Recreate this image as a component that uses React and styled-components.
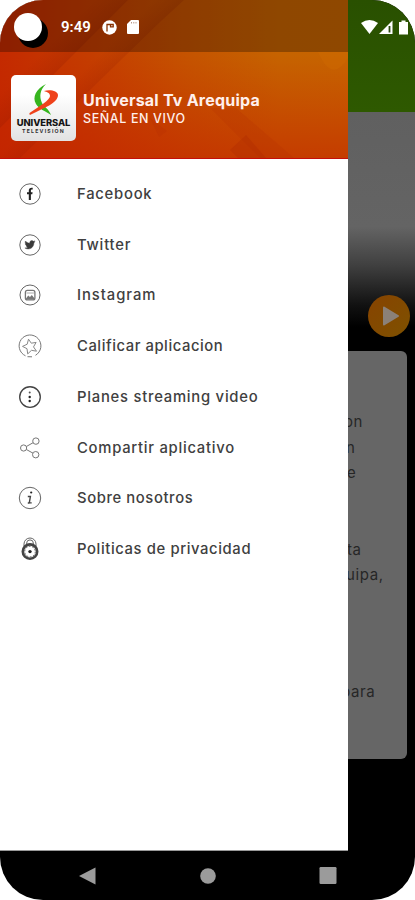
import React from 'react';
import styled, { createGlobalStyle } from 'styled-components';

const GlobalStyle = createGlobalStyle`
  * {
    box-sizing: border-box;
  }

  body {
    margin: 0;
    background: #fff;
    font-family: Inter, 'Open Sans', sans-serif;
  }
`;

const Phone = styled.div`
  width: 415px;
  height: 900px;
  display: flex;
  flex-direction: column;
  position: relative;
  overflow: hidden;
  background: #000;
  border-radius: 43px;
`;

const Content = styled.div`
  display: flex;
  height: 851px;
`;

const Drawer = styled.aside`
  width: 348px;
  flex: none;
  background: #fff;
  border-bottom: 1px solid #999;
`;

const Header = styled.header`
  position: relative;
  height: 159px;
  border-bottom: 1px solid #c40f0c;
  background:
    linear-gradient(to bottom, rgba(196, 34, 0, 0) 35%, rgba(196, 34, 0, 0.6) 100%),
    linear-gradient(to right, #c42a00 0%, #c43c00 25%, #c55400 55%, #c66300 80%, #c66400 100%);
`;

const Pattern = styled.svg`
  position: absolute;
  inset: 0;
`;

const StatusShade = styled.div`
  position: relative;
  height: 52px;
  background: rgba(0, 0, 0, 0.28);
`;

const Brand = styled.div`
  position: relative;
  display: flex;
  align-items: center;
  height: 106px;
  padding: 5px 0 0 11px;
  gap: 7px;
`;

const Logo = styled.div`
  width: 65px;
  height: 66px;
  flex: none;
  display: flex;
  flex-direction: column;
  align-items: center;
  padding-top: 8px;
  border-radius: 5px;
  background: linear-gradient(#fff 30%, #e2e2e2);
`;

const LogoName = styled.span`
  margin-top: 1px;
  font-size: 9.4px;
  line-height: 9px;
  font-weight: 800;
  letter-spacing: -0.1px;
  color: #151515;
`;

const LogoSub = styled.span`
  font-size: 5.2px;
  line-height: 8px;
  font-weight: 700;
  letter-spacing: 1.2px;
  color: #333;
`;

const Titles = styled.div`
  display: flex;
  flex-direction: column;
  padding-top: 4px;
  color: #fff0ec;
  white-space: nowrap;
`;

const Title = styled.span`
  font-size: 16px;
  line-height: 19px;
  font-weight: 700;
  letter-spacing: 0.22px;
`;

const Subtitle = styled.span`
  font-size: 12.5px;
  line-height: 18px;
  font-weight: 500;
  letter-spacing: 0.6px;
`;

const Menu = styled.nav`
  display: flex;
  flex-direction: column;
  padding-top: 9.6px;
`;

const MenuItem = styled.a`
  display: flex;
  align-items: center;
  height: 50.75px;
  padding-left: 18px;
  gap: 35px;
  color: #404040;
  font-size: 14.8px;
  font-weight: 500;
  letter-spacing: ${({ $spacing }) => $spacing}px;
  white-space: nowrap;

  svg {
    flex: none;
  }
`;

const Page = styled.main`
  flex: 1;
  min-width: 0;
  display: flex;
  flex-direction: column;
  overflow: hidden;
`;

const Toolbar = styled.div`
  height: 112px;
  flex: none;
  background: linear-gradient(#295000, #2e5900);
`;

const Video = styled.div`
  height: 239px;
  flex: none;
  padding: 183px 5px 0 0;
  display: flex;
  justify-content: flex-end;
  align-items: flex-start;
  background: linear-gradient(#606060 0%, #646464 48%, #404040 64%, #111 81%, #000 90%);
`;

const PlayButton = styled.div`
  width: 42px;
  height: 42px;
  display: flex;
  align-items: center;
  justify-content: center;
  padding-left: 4px;
  border-radius: 50%;
  background: linear-gradient(135deg, #874300, #7e5100);
`;

const Card = styled.section`
  height: 408px;
  margin-right: 8px;
  padding-top: 58px;
  border-radius: 0 6px 6px 0;
  background: #666;
  overflow: hidden;
`;

const Line = styled.p`
  margin: ${({ $gap }) => $gap || 0}px 0 0 ${({ $shift }) => $shift}px;
  height: 25.5px;
  line-height: 25.5px;
  font-size: 15px;
  letter-spacing: 0.6px;
  color: #262626;
  white-space: nowrap;
`;

const StatusBar = styled.div`
  position: absolute;
  top: 0;
  left: 0;
  right: 0;
  height: 52px;
  display: flex;
  align-items: center;
  padding: 2px 6px 0 14px;
  color: #fff;
`;

const Camera = styled.div`
  width: 28px;
  height: 28px;
  margin-right: 19px;
  border-radius: 50%;
  background: #fff;
  box-shadow: 5px 6px 0 1px #000;
`;

const Clock = styled.span`
  width: 41px;
  font-family: Roboto, sans-serif;
  font-size: 15px;
  font-weight: 600;
`;

const StatusIcons = styled.div`
  display: flex;
  align-items: center;
  gap: ${({ $gap }) => $gap}px;
  margin-left: ${({ $end }) => ($end ? 'auto' : 0)};
`;

const NavBar = styled.div`
  flex: 1;
  display: flex;
  align-items: center;
  justify-content: space-between;
  padding: 0 78px 0 79px;
`;

const Icon = ({ size = 24, children }) => (
  <svg width={size} height={size} viewBox="0 0 24 24" fill="none" stroke="#666" strokeWidth="1">
    {children}
  </svg>
);

const FacebookIcon = () => (
  <Icon>
    <circle cx="12" cy="12" r="10.2" />
    <path
      d="M10.8 18v-5.8H9v-2h1.8V8.600c0-2.200 1.200-3.200 3.900-2.900v1.900c-1.400-.1-1.800.2-1.800 1.100v1.500h1.700l-.3 2h-1.400V18z"
      fill="#222"
      stroke="none"
    />
  </Icon>
);

const TwitterIcon = () => (
  <Icon>
    <circle cx="12" cy="12" r="10.2" />
    <path
      d="M17 8.600c-.4.2-.8.3-1.200.3.4-.3.7-.7.9-1.100-.4.2-.9.4-1.300.5a2.100 2.100 0 0 0-3.600 1.900c-1.700-.1-3.300-.9-4.300-2.200-.6 1-.3 2.200.6 2.800-.3 0-.6-.1-.9-.3 0 1 .7 1.900 1.700 2.100-.3.1-.6.1-.9 0 .2.9 1 1.500 1.900 1.500-.8.7-2 1-3 .9 4.400 2.700 9.100-.4 9-5.200.4-.3.8-.7 1.100-1.200z"
      fill="#3a3a3a"
      stroke="#3a3a3a"
      strokeWidth=".4"
    />
  </Icon>
);

const InstagramIcon = () => (
  <Icon>
    <circle cx="12" cy="12" r="10" />
    <rect x="7.400" y="7.400" width="9.500" height="9.500" rx="2" strokeWidth="1.300" stroke="#777" />
    <path d="M8 15.500l2.200-3 1.800 1.600 1.800-2.100 2.800 3.500v1H8z" fill="#777" stroke="none" />
    <path d="M8.500 10h7.400" stroke="#aaa" />
  </Icon>
);

const RateIcon = () => (
  <Icon>
    <path d="M7.500 21.800A10.900 10.900 0 1 1 17.500 21.300M9.500 22.700l4.500.1" stroke="#777" />
    <path
      d="M10.500 5.200l2.800 4 4.800-.8-2.600 4.500 3 4.300-5-.9-3.800 3.600-.7-5.200-4.500-2.300 4.700-2.200z"
      stroke="#888"
      strokeLinejoin="round"
    />
  </Icon>
);

const PlansIcon = () => (
  <Icon>
    <circle cx="12" cy="12" r="10.3" strokeWidth="1.350" stroke="#444" />
    <g fill="#222" stroke="none">
      <circle cx="11.700" cy="7.500" r="1" fill="#555" />
      <circle cx="11.700" cy="12" r="1.200" />
      <circle cx="11.700" cy="16" r="1.200" />
    </g>
  </Icon>
);

const ShareIcon = () => (
  <Icon>
    <g stroke="#777">
      <circle cx="5.600" cy="12" r="3.100" />
      <circle cx="17.900" cy="5.100" r="3.200" />
      <circle cx="17.700" cy="18.700" r="3.200" />
      <path d="M8.400 10.500l6.700-3.800M8.400 13.500l6.600 3.700" />
    </g>
  </Icon>
);

const AboutIcon = () => (
  <Icon>
    <circle cx="12" cy="12" r="10.700" />
    <circle cx="13.200" cy="6.500" r="1.100" fill="#222" stroke="none" />
    <path d="M9.800 10.500h2.600l-1.100 6.400h2.400M9.800 17h1.600" stroke="#444" strokeWidth="1.400" />
  </Icon>
);

const PrivacyIcon = () => (
  <Icon>
    <path d="M6 9.500V7a6 6 0 0 1 12 0v2.500M8.600 7.500V6.300a3.300 3.300 0 0 1 6.800 0v1.200" stroke="#666" />
    <circle cx="12" cy="14.600" r="7.200" stroke="#444" strokeWidth="2.600" />
    <circle cx="12" cy="14.600" r="5.300" stroke="#555" strokeWidth="1" strokeDasharray="1.800 1.500" />
    <circle cx="12" cy="14.600" r="1.700" fill="#222" stroke="none" />
  </Icon>
);

const items = [
  { label: 'Facebook', icon: FacebookIcon, spacing: 0.76 },
  { label: 'Twitter', icon: TwitterIcon, spacing: 0.8 },
  { label: 'Instagram', icon: InstagramIcon, spacing: 0.96 },
  { label: 'Calificar aplicacion', icon: RateIcon, spacing: 0.56 },
  { label: 'Planes streaming video', icon: PlansIcon, spacing: 0.76 },
  { label: 'Compartir aplicativo', icon: ShareIcon, spacing: 0.74 },
  { label: 'Sobre nosotros', icon: AboutIcon, spacing: 0.6 },
  { label: 'Politicas de privacidad', icon: PrivacyIcon, spacing: 0.62 },
];

const lines = [
  { text: 'on', shift: -4 },
  { text: 'n', shift: -2 },
  { text: 'e', shift: -1 },
  { text: 'ta', shift: -1, gap: 51 },
  { text: 'uipa,', shift: -2 },
  { text: 'para', shift: -7, gap: 91.5 },
];

const HeaderPattern = () => (
  <Pattern width="348" height="158" viewBox="0 0 348 158">
    <defs>
      <linearGradient id="fold" gradientUnits="userSpaceOnUse" x1="29" y1="65" x2="52" y2="88">
        <stop offset="0" stopColor="#8b1500" stopOpacity="0" />
        <stop offset="1" stopColor="#8b1500" stopOpacity=".28" />
      </linearGradient>
      <linearGradient id="edge" gradientUnits="userSpaceOnUse" x1="72" y1="82" x2="92" y2="102">
        <stop offset="0" stopColor="#8b1500" stopOpacity="0" />
        <stop offset="1" stopColor="#8b1500" stopOpacity=".25" />
      </linearGradient>
    </defs>
    <path d="M100 28L0 128V60L60 0h68z" fill="url(#fold)" />
    <path d="M160 22L20 158H-20L138 0h46z" fill="url(#edge)" />
    <path d="M210 108l50 50h34l-58-50z" fill="#b22c00" fillOpacity=".2" />
    <path d="M246 135l-16 15 8 8h28z" fill="#a82400" fillOpacity=".25" />
    <path d="M150 118l17 13-8 6z" fill="#a82400" fillOpacity=".12" />
    <path d="M318 52q14 32 30 6v-6z" fill="#cf6b00" fillOpacity=".4" />
  </Pattern>
);

const LogoMark = () => (
  <svg width="32" height="34" viewBox="0 0 32 34">
    <path
      d="M18 1C8 6 4 14 8 21c3 5 9 7 15 11-2-6-7-8-9-12C11 13 12 7 18 1z"
      fill="#37b51f"
    />
    <path
      d="M16 8c6-2 14 0 14 4 0 8-14 13-28 20-1-1-1-2 1-3 9-6 19-12 19-16 0-3-3-4-6-5z"
      fill="#ef421b"
    />
  </svg>
);

const App = () => (
  <>
    <GlobalStyle />
    <Phone>
      <Content>
        <Drawer>
          <Header>
            <HeaderPattern />
            <StatusShade />
            <Brand>
              <Logo>
                <LogoMark />
                <LogoName>UNIVERSAL</LogoName>
                <LogoSub>TELEVISIÓN</LogoSub>
              </Logo>
              <Titles>
                <Title>Universal Tv Arequipa</Title>
                <Subtitle>SEÑAL EN VIVO</Subtitle>
              </Titles>
            </Brand>
          </Header>
          <Menu>
            {items.map(({ label, icon: ItemIcon, spacing }) => (
              <MenuItem key={label} $spacing={spacing}>
                <ItemIcon />
                {label}
              </MenuItem>
            ))}
          </Menu>
        </Drawer>
        <Page>
          <Toolbar />
          <Video>
            <PlayButton>
              <svg width="18" height="22" viewBox="0 0 18 22">
                <path d="M2 2.500l14 8.500-14 8.500z" fill="#8b8178" stroke="#8b8178" strokeWidth="2" strokeLinejoin="round" />
              </svg>
            </PlayButton>
          </Video>
          <Card>
            {lines.map(({ text, shift, gap }) => (
              <Line key={text} $shift={shift} $gap={gap}>{text}</Line>
            ))}
          </Card>
        </Page>
      </Content>
      <NavBar>
        <svg width="17" height="18" viewBox="0 0 17 18">
          <path d="M0 9L16.500 .5v17z" fill="#9b9b9b" />
        </svg>
        <svg width="16" height="16" viewBox="0 0 16 16">
          <circle cx="8" cy="8" r="7.800" fill="#9b9b9b" />
        </svg>
        <svg width="18" height="17" viewBox="0 0 18 17">
          <rect x=".5" width="17" height="17" rx="1.200" fill="#9b9b9b" />
        </svg>
      </NavBar>
      <StatusBar>
        <Camera />
        <Clock>9:49</Clock>
        <StatusIcons $gap={10}>
          <svg width="15" height="15" viewBox="0 0 15 15">
            <circle cx="7.500" cy="7.500" r="7.200" fill="#fff" />
            <path d="M5 11.500v-7h3M8.500 4.500h2.700v2.300H8.500z" fill="none" stroke="#873000" strokeWidth="1.300" />
          </svg>
          <svg width="12" height="14" viewBox="0 0 12 14">
            <path d="M4 0h7q1 0 1 1v12q0 1-1 1H1q-1 0-1-1V4z" fill="#fff" />
            <path d="M4.500 2v1.500M6.800 2v1.500M9 2v1.500" stroke="#b89a8a" />
          </svg>
        </StatusIcons>
        <StatusIcons $gap={1} $end>
          <svg width="17" height="14" viewBox="0 0 17 14">
            <path d="M0 3Q8.500-3 17 3L8.500 14z" fill="#fff" />
          </svg>
          <svg width="14" height="14" viewBox="0 0 14 14">
            <path d="M0 14L13.500 .5V14z" fill="#fff" />
            <path d="M10.500 6v6.500" stroke="#2a4a10" strokeWidth="1.800" />
          </svg>
          <svg width="15" height="15" viewBox="0 0 15 15">
            <path d="M7.500 .5h4v1.500h2.500V14.500H5V2h2.500z" fill="#fff" />
          </svg>
        </StatusIcons>
      </StatusBar>
    </Phone>
  </>
);

export default App;
